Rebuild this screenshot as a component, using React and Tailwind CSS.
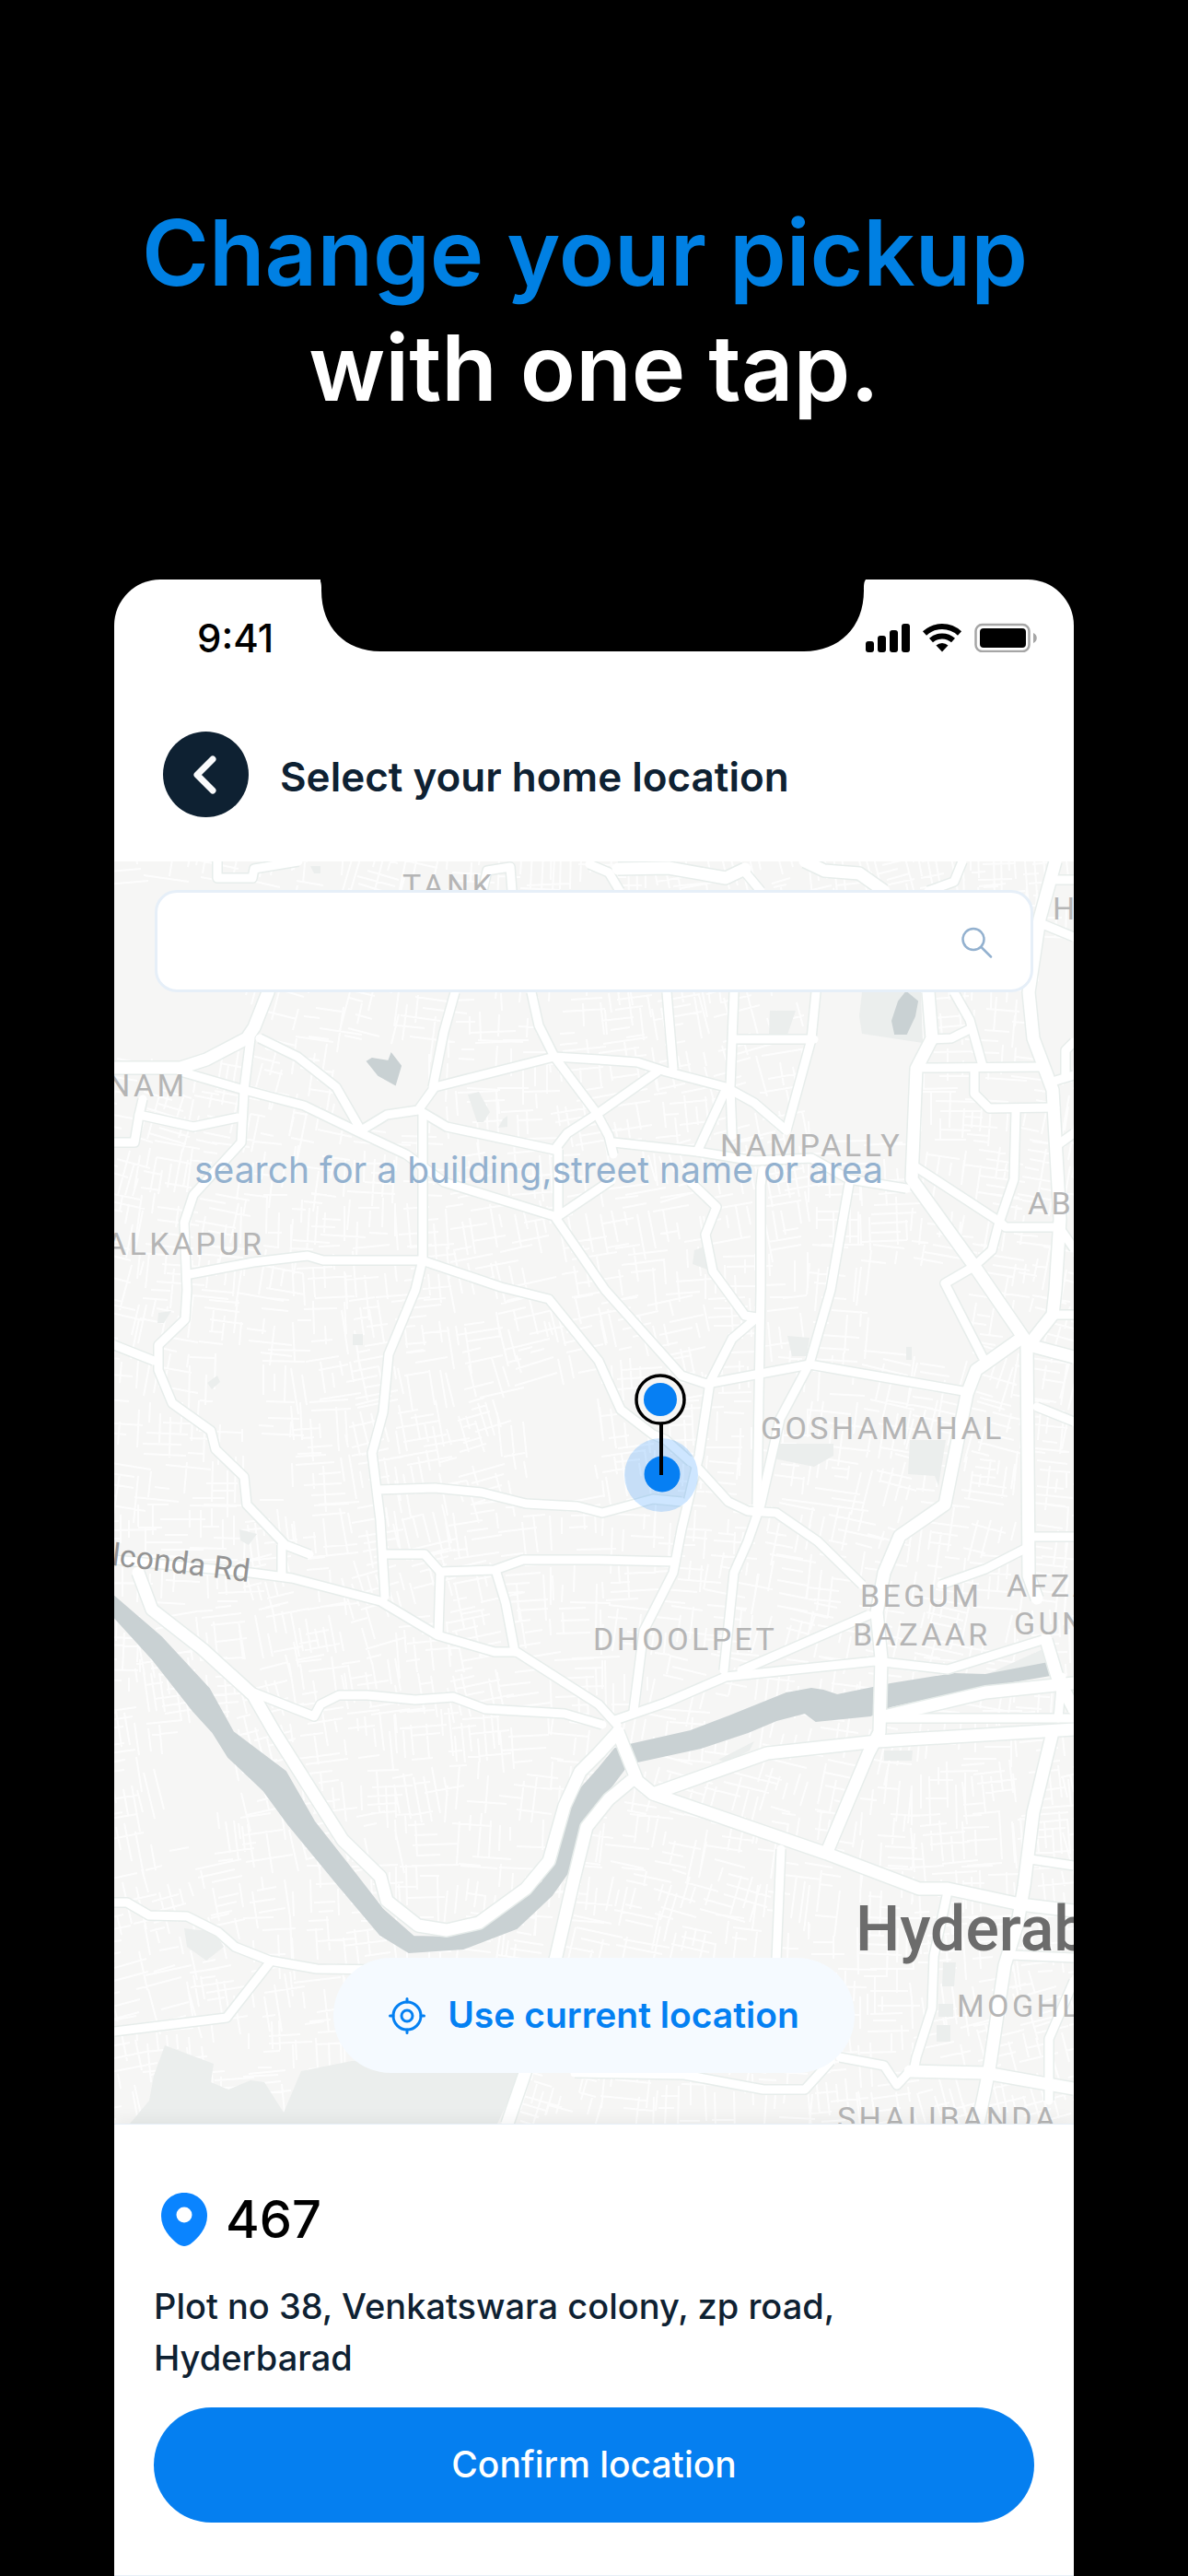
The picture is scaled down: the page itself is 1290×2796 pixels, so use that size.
import React, { useState } from 'react';

// Roads of the map, as "x,y x,y" point lists in map units
const avenues = [
    '0,224 72,224 100,215 144,192 152,180 167,142 178,100',
    '884,142 888,192 871,225 866,345 936,442 991,522 993,775 1002,800',
    '1022,0 1005,62 993,142 998,192 1019,248 1027,388 1022,465 1019,492 993,525',
    '993,525 1042,538',
    '984,518 936,552 926,578 902,698 853,732 836,772 828,815 833,865 831,945 819,968 774,1075',
    '836,928 946,902 1042,892',
    '585,1012 709,968 829,955 1042,942',
    '547,945 568,998 585,1012 774,1077 874,1115 905,1115 984,1132 1042,1139',
    '1019,945 998,1032 988,1112 981,1152 967,1198 950,1312 938,1370',
    '427,1370 446,1315 480,1188 499,1105 513,1048 537,1018 561,998',
    '26,772 41,812 96,855 151,905 174,945 248,1062 289,1102 296,1128 330,1155 361,1160 396,1152 447,1115 472,1085 489,1025 506,988 526,968 547,945',
    '547,8 602,7 664,18 685,8',
    '750,0 771,10 809,13 836,32',
    '864,1313 946,1315 1042,1332',
    '1012,845 1024,885 1042,920',
];

const roads = [
    '72,228 141,248 206,265 268,295 317,318 358,348 478,385 533,465 616,558 643,567 755,546 922,575',
    '158,192 199,212 241,245 268,292 296,275 330,270 348,245 399,232 478,212 526,215 568,218 599,228 664,245 695,262 730,292',
    '730,292 757,193 762,142 770,100',
    '370,142 358,185 346,245',
    '453,142 461,178 478,212 523,272 537,298 542,318',
    '334,272 361,288 478,313 492,295 523,275 590,228',
    '335,275 335,432 327,465 298,535 292,598 280,642 289,715 294,798',
    '482,313 482,385 540,346',
    '148,192 141,248 138,305 86,362 76,392 79,465 77,497 48,525 48,552 63,588 105,618 110,638 141,668 144,698 186,742 212,752',
    '182,742 182,775',
    '0,758 148,772 193,778 289,803 351,840 413,858 437,858 526,915 546,937',
    '0,525 43,542',
    '286,682 348,680 399,685 447,697 503,700 530,707 585,692 616,695',
    '296,752 337,752 354,771 413,769 444,758 526,758 609,760',
    '354,772 352,838',
    '415,772 425,805 435,858',
    '151,902 217,928 224,915 244,905 275,905 327,910 368,907 403,920 489,925 530,937',
    '0,1130 14,1130 38,1144 79,1145 113,1162 131,1178 169,1193 220,1202 296,1203',
    '169,1195 122,1255 0,1270',
    '31,258 27,275 86,288 134,278',
    '27,275 22,305 0,305',
    '82,448 151,435 210,428 227,433 334,433 420,462 472,475 526,542 550,595 585,622 599,628 626,652',
    '626,650 667,695 688,705 719,707 764,738 812,785',
    '600,142 607,225',
    '673,142 669,245 671,298',
    '704,335 702,352 702,465 698,698',
    '674,193 760,193',
    '664,248 633,315',
    '542,305 633,315 695,325 757,322 798,345 860,355',
    '798,350 778,465 755,545 723,605 702,698 688,738 673,772 662,878',
    '626,348 654,375 642,405 650,445 685,493 698,495 671,518 647,565 635,645 616,725 607,772 575,835 564,922',
    '912,142 929,172 943,222',
    '888,193 909,192 929,182',
    '878,224 1008,223',
    '934,225 934,252 950,268 1022,267',
    '979,272 977,345 960,395 953,422 933,440 902,458 943,538',
    '871,332 960,390 968,397 1026,397 1042,420',
    '1022,238 1042,232',
    '1033,232 1033,205 1042,196',
    '1008,68 1042,82',
    '1022,20 1042,20',
    '1024,308 1042,295',
    '1019,492 1042,492',
    '898,785 946,768 991,745',
    '995,733 1042,733',
    '1002,592 1042,608',
    '544,932 599,913 664,885 826,868 905,877 1008,845',
    '681,878 819,818',
    '724,1072 719,1192',
    '905,1118 890,1188 888,1245 871,1298 868,1313',
    '995,1083 1042,1090',
    '974,1187 1042,1190',
    '788,1298 836,1307 850,1328 864,1313',
    '500,1315 619,1317 705,1333 750,1333 778,1302',
    '1042,1215 1015,1278 1015,1345',
    '836,930 1042,930',
    '1029,885 1025,930',
    '112,0 112,18 150,18 152,8 200,0',
    '400,32 405,10 430,6 432,32',
    '516,3 537,12 549,32',
    '682,8 702,32',
    '884,32 912,22 921,0',
];

const parks = [
    '812,142 809,168 812,187 878,197 876,142',
    '712,162 740,162 731,188 711,187',
    '384,253 396,250 408,272 401,283 394,283',
    '422,280 427,276 427,288 417,289',
    '630,422 641,418 649,445 628,437',
    '48,490 62,488 54,501 47,501',
    '259,513 270,513 270,525 259,525',
    '101,566 112,558 115,565 106,573',
    '136,725 155,730 146,742 137,737',
    '731,515 755,517 752,537 736,537',
    '719,632 781,632 781,645 760,657 716,648',
    '864,628 903,628 895,678 891,667 862,665',
    '860,527 866,527 866,541 860,541',
    '76,1158 92,1160 107,1160 119,1178 100,1193 79,1178',
    '55,1285 108,1305 105,1325 124,1333 148,1323 163,1325 184,1358 203,1313 258,1302 447,1305 416,1370 17,1370 38,1345 43,1318',
    '900,1195 914,1195 912,1221 899,1221',
    '895,1240 911,1240 911,1254 895,1254',
    '893,1263 908,1263 908,1281 893,1281',
    '836,965 867,965 866,976 836,976',
    '213,5 224,5 224,13 217,13',
    '946,883 1015,852 1015,872',
    '656,975 695,955 690,965 665,978',
];

const water = [
    '0,798 51,842 103,898 129,945 186,988 217,1042 261,1098 292,1138 325,1167 365,1168 399,1155 465,1108 489,1052 499,1015 526,985 544,963 564,958 626,944 668,928 730,903 757,898 770,900 785,905 819,898 843,893 912,882 946,883 1015,870 1017,883 929,898 843,917 821,927 762,933 750,924 719,932 688,945 637,962 568,977 554,985 526,1022 509,1042 492,1098 475,1122 437,1158 379,1180 320,1184 289,1165 241,1108 189,1045 162,1008 124,972 107,945 86,922 41,865 0,820',
    '275,217 280,214 298,217 301,209 311,222 305,242 287,232',
    '860,142 872,152 869,168 860,187 848,187 845,173 852,152',
];

// Open ground without side streets: x, y, width, height
const openAreas = [
    [0, 30, 140, 175],
    [245, 205, 85, 75],
    [765, 140, 105, 160],
    [110, 545, 50, 60],
    [150, 625, 40, 50],
    [450, 570, 70, 120],
    [825, 440, 100, 90],
    [700, 555, 40, 60],
    [60, 950, 50, 110],
    [1005, 85, 37, 120],
    [120, 1170, 30, 20],
];

const labels = [
    { text: 'TANK', x: 313, y: 38 },
    { text: 'NAM', x: -7, y: 255 },
    { text: 'ALKAPUR', x: -9, y: 427 },
    { text: 'NAMPALLY', x: 658, y: 320 },
    { text: 'H', x: 1019, y: 63 },
    { text: 'AB', x: 992, y: 383 },
    { text: 'GOSHAMAHAL', x: 702, y: 627 },
    { text: 'BEGUM', x: 810, y: 809 },
    { text: 'BAZAAR', x: 802, y: 851 },
    { text: 'AFZA', x: 969, y: 798 },
    { text: 'GUN', x: 977, y: 839 },
    { text: 'DHOOLPET', x: 520, y: 856 },
    { text: 'MOGHL', x: 915, y: 1254 },
    { text: 'SHALIBANDA', x: 785, y: 1376 },
];

// Builds the fine side streets with a seeded generator, so they are the same on each load
function buildStreets() {
    let seed = 7;
    const rand = () => {
        seed = (seed * 16807) % 2147483647;
        return seed / 2147483647;
    };
    const isOpen = (x, y) => openAreas.some(([ax, ay, w, h]) => x > ax && x < ax + w && y > ay && y < ay + h);

    let d = '';
    for (let cy = 0; cy < 1400; cy += 56) {
        for (let cx = 0; cx < 1070; cx += 56) {
            const angle = Math.sin(cx / 170 + cy / 260) * 0.2 + (rand() - 0.5) * 0.2;
            const cos = Math.cos(angle);
            const sin = Math.sin(angle);
            const gap = 8 + rand() * 6;
            for (let dir = 0; dir < 2; dir++) {
                for (let o = -30; o < 30; o += gap) {
                    if (rand() < 0.3) continue;
                    const start = -32 + rand() * 34;
                    const end = start + 14 + rand() * 38;
                    const [x1, y1, x2, y2] = dir === 0 ? [start, o, end, o] : [o, start, o, end];
                    const ax = cx + x1 * cos - y1 * sin;
                    const ay = cy + x1 * sin + y1 * cos;
                    const bx = cx + x2 * cos - y2 * sin;
                    const by = cy + x2 * sin + y2 * cos;
                    if (isOpen(ax, ay) || isOpen(bx, by) || isOpen((ax + bx) / 2, (ay + by) / 2)) continue;
                    d += `M${Math.round(ax)} ${Math.round(ay)}L${Math.round(bx)} ${Math.round(by)}`;
                }
            }
        }
    }
    return d;
}

const streets = buildStreets();

function CityMap() {
    return (
        <svg
            className="absolute inset-0 h-full w-full"
            viewBox="0 0 1042 1370"
            preserveAspectRatio="xMidYMid slice"
            role="img"
            aria-label="Map of Hyderabad"
        >
            <rect width="1042" height="1370" fill="#f6f6f5" />
            <path d={streets} fill="none" stroke="#ffffff" strokeWidth="2" opacity="0.8" />
            {parks.map((p) => <polygon key={p} points={p} fill="#ebeeed" />)}
            {water.map((p) => <polygon key={p} points={p} fill="#c9d1d3" stroke="#c9d1d3" strokeWidth="2" />)}

            {/* Casing first, then the white road surface, so that crossings stay open */}
            <g fill="none" stroke="#e7edeb" strokeLinejoin="round">
                {roads.map((p) => <polyline key={p} points={p} strokeWidth="12" />)}
                {avenues.map((p) => <polyline key={p} points={p} strokeWidth="16" />)}
            </g>
            <g fill="none" stroke="#ffffff" strokeLinejoin="round" strokeLinecap="round">
                {roads.map((p) => <polyline key={p} points={p} strokeWidth="9" />)}
                {avenues.map((p) => <polyline key={p} points={p} strokeWidth="13" />)}
            </g>

            <g className="font-['Roboto',sans-serif] text-[34px] tracking-widest" fill="#b5b5b5">
                {labels.map((l) => <text key={l.text} x={l.x} y={l.y}>{l.text}</text>)}
            </g>
            <text
                className="font-['Roboto',sans-serif] text-[34px]"
                fill="#949494"
                textAnchor="end"
                transform="translate(146 782) rotate(7)"
            >
                olconda Rd
            </text>
            <text className="font-['Roboto',sans-serif] text-[68px] font-medium" fill="#6c6c6c" x="805" y="1182">Hyderab</text>

            {/* Pickup marker */}
            <circle cx="594" cy="666" r="40" fill="#0a84ff" fillOpacity="0.2" />
            <circle cx="595" cy="665" r="19.5" fill="#067ff3" />
            <path d="M594 611V666" stroke="#000000" strokeWidth="4" />
            <circle cx="593" cy="584" r="26" fill="#f6f6f5" stroke="#000000" strokeWidth="3.5" />
            <circle cx="593" cy="584" r="18" fill="#067ff3" />
        </svg>
    );
}

function StatusIcons() {
    return (
        <svg className="h-8 w-[186px]" viewBox="0 0 186 32" aria-hidden="true">
            <rect x="0" y="20" width="9" height="12" rx="3" />
            <rect x="13" y="14" width="9" height="18" rx="3" />
            <rect x="26" y="8" width="9" height="24" rx="3" />
            <rect x="39" y="1" width="9" height="31" rx="3" />
            <g fill="none" stroke="#000000" strokeWidth="6">
                <path d="M64 11.500a28 28 0 0 1 38 0" />
                <path d="M71 19a18 18 0 0 1 24 0" />
            </g>
            <path d="M76.500 24.500a9.500 9.500 0 0 1 13 0L83 31.500z" />
            <rect x="119.500" y="2" width="58" height="29" rx="7" fill="none" stroke="#a6a6a6" strokeWidth="2.500" />
            <rect x="124" y="6" width="50" height="21" rx="4" />
            <path d="M182 11c5 2 5 9 0 11z" fill="#a6a6a6" />
        </svg>
    );
}

function App() {
    const [search, setSearch] = useState('');

    return (
        <div className="flex min-h-screen flex-col bg-black px-31 font-['Inter',sans-serif]">
            <h1 className="pt-[212px] text-center text-[99px] leading-[125px] font-semibold whitespace-nowrap text-white">
                <span className="block pr-5 text-[#0080e3]">Change your pickup</span>
                <span className="block">with one tap.</span>
            </h1>

            <div className="relative mt-[167px] flex grow flex-col overflow-hidden rounded-t-[50px] bg-white">
                {/* Notch */}
                <svg className="absolute top-0 left-1/2 h-[78px] w-[594px] -translate-x-1/2" viewBox="0 0 594 78" aria-hidden="true">
                    <path d="M-1 0C1 3 1 6 1 12 1 52 27 78 65 78H525C563 78 590 52 590 12 590 6 590 3 592 0z" />
                </svg>

                <div className="flex h-[126px] items-center justify-between pr-10 pl-[90px]">
                    <span className="text-[42px] font-medium text-black">9:41</span>
                    <StatusIcons />
                </div>

                <header className="flex items-center gap-[34px] pt-[39px] pb-12 pl-[53px]">
                    <button
                        type="button"
                        aria-label="Back"
                        className="flex h-[93px] w-[93px] items-center justify-center rounded-full bg-[#0e2132]"
                    >
                        <svg className="h-12 w-12" viewBox="0 0 48 48" fill="none" aria-hidden="true">
                            <path d="M31 7L14 24L31 41" stroke="#fafbfc" strokeWidth="7" strokeLinecap="round" strokeLinejoin="round" />
                        </svg>
                    </button>
                    <h2 className="pt-1 text-[44px] font-semibold text-[#0e2132]">Select your home location</h2>
                </header>

                <main className="relative flex h-[1370px] flex-col overflow-hidden">
                    <CityMap />
                    <div className="relative flex grow flex-col items-stretch px-11 pt-[31px] pb-[55px]">
                        <div className="flex h-[111px] items-center rounded-3xl border-3 border-[#e6eff8] bg-white pr-10 pl-10">
                            <input
                                id="search"
                                type="text"
                                className="h-full grow text-[39px] text-[#0e2132] outline-none"
                                value={search}
                                onChange={(e) => setSearch(e.target.value)}
                            />
                            <svg className="h-9 w-9" viewBox="0 0 36 36" fill="none" stroke="#93b1cf" strokeWidth="2.500" strokeLinecap="round" aria-hidden="true">
                                <circle cx="14" cy="15.500" r="11.500" />
                                <path d="M22.500 24L33 34.500" />
                            </svg>
                        </div>
                        <label htmlFor="search" className="mt-[169px] pl-[43px] text-[39px] leading-12 text-[#93b1cf]">
                            search for a building,street name or area
                        </label>
                        <button
                            type="button"
                            className="mt-auto flex h-[125px] items-center gap-6 self-center rounded-full bg-[#f5faff] px-[60px] text-[39px] font-semibold text-[#0480f2]"
                        >
                            <svg className="h-10 w-10" viewBox="0 0 40 40" fill="none" stroke="currentColor" strokeWidth="3" strokeLinecap="round" aria-hidden="true">
                                <circle cx="20" cy="20" r="15" />
                                <circle cx="20" cy="20" r="6" />
                                <path d="M20 1.500V5M20 35V38.500M1.500 20H5M35 20H38.500" />
                            </svg>
                            Use current location
                        </button>
                    </div>
                </main>

                <section className="relative grow border-y border-[#e6eff8] bg-white px-[43px] pt-[74px] pb-14 shadow-[0_-4px_16px_rgba(0,0,0,0.05)]">
                    <div className="flex items-center gap-5 pl-2">
                        <svg className="h-[58px] w-[50px]" viewBox="0 0 50 58" aria-hidden="true">
                            <path d="M25 0C11 0 0 10.500 0 25c0 14 10 24 18 30.500 4.500 3.300 9.500 3.300 14 0C40 49 50 39 50 25 50 10.500 39 0 25 0z" fill="#0a84ff" />
                            <circle cx="25" cy="24" r="8.500" fill="#ffffff" />
                        </svg>
                        <span className="text-[56px] leading-14 font-medium text-black">467</span>
                    </div>
                    <p className="mt-[37px] max-w-[860px] text-[38px] leading-14 font-medium text-[#0e2132]">
                        Plot no 38, Venkatswara colony, zp road, Hyderbarad
                    </p>
                    <button
                        type="button"
                        className="mt-[26px] h-[125px] w-full rounded-full bg-[#057ff0] text-[39px] font-medium text-white"
                    >
                        Confirm location
                    </button>
                </section>
            </div>
        </div>
    );
}

export default App;
